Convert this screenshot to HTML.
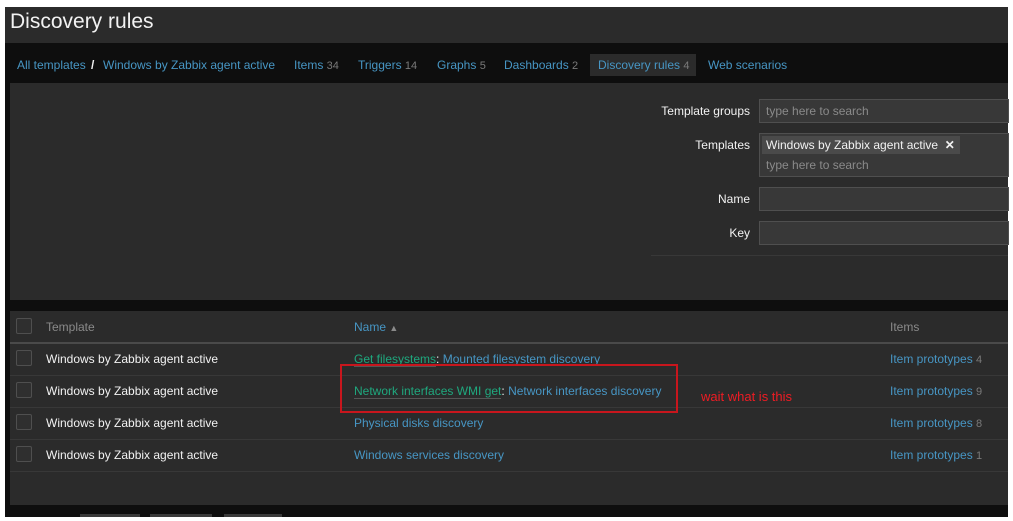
<!DOCTYPE html>
<html><head><meta charset="utf-8"><style>
*{margin:0;padding:0;box-sizing:border-box}
body{width:1013px;height:521px;background:#fff;position:relative;overflow:hidden;font-family:"Liberation Sans",Arial,sans-serif;font-size:12px}
.a{position:absolute}
.app{left:5px;top:7px;width:1003px;height:510px;background:#0e0e0e}
.hdr{left:5px;top:7px;width:1003px;height:36px;background:#2b2b2b;color:#f2f2f2;font-size:21px;padding:3px 0 0 5px}
.lnk{color:#4796c4}
.cnt{color:#7a7a7a;font-size:11px}
.nav span{position:absolute;top:58px}
.nav span.cnt{position:static}
.flt{left:10px;top:83px;width:998px;height:217px;background:#2b2b2b}
.lbl{color:#f2f2f2;text-align:right;width:120px}
.inp{background:#383838;border:1px solid #4f4f4f;color:#8a8a8a;padding-left:6px}
.tbl{left:10px;top:311px;width:998px;height:194px;background:#2b2b2b}
.row{left:10px;width:998px;height:32px;border-bottom:1px solid #383838}
.cb{width:16px;height:16px;border:1px solid #4f4f4f;background:#2f2f2f;border-radius:2px}
.w{color:#f2f2f2}
.g{color:#1fa87e}
</style></head><body>
<div class="a app"></div>
<div class="a hdr">Discovery rules</div>
<div class="a" style="left:1008px;top:7px;width:5px;height:514px;background:#fff"></div>
<div class="nav">
<span class="lnk" style="left:17px">All templates</span>
<span style="left:91px;color:#f2f2f2;font-weight:bold">/</span>
<span class="lnk" style="left:103px">Windows by Zabbix agent active</span>
<span class="lnk" style="left:294px">Items <span class="cnt">34</span></span>
<span class="lnk" style="left:358px">Triggers <span class="cnt">14</span></span>
<span class="lnk" style="left:437px">Graphs <span class="cnt">5</span></span>
<span class="lnk" style="left:504px">Dashboards <span class="cnt">2</span></span>
</div>
<div class="a" style="left:590px;top:54px;width:106px;height:22px;background:#2b2b2b"></div>
<div class="a lnk" style="left:598px;top:58px">Discovery rules <span class="cnt">4</span></div>
<div class="a lnk" style="left:708px;top:58px">Web scenarios</div>
<div class="a flt"></div>
<div class="a lbl" style="left:630px;top:104px">Template groups</div>
<div class="a inp" style="left:759px;top:99px;width:250px;height:24px;line-height:22px">type here to search</div>
<div class="a lbl" style="left:630px;top:138px">Templates</div>
<div class="a inp" style="left:759px;top:133px;width:250px;height:44px"></div>
<div class="a" style="left:762px;top:136px;width:198px;height:18px;background:#4a4a4a;color:#f2f2f2;padding:2px 0 0 4px">Windows by Zabbix agent active &nbsp;<b>✕</b></div>
<div class="a" style="left:766px;top:158px;color:#8a8a8a">type here to search</div>
<div class="a lbl" style="left:630px;top:192px">Name</div>
<div class="a inp" style="left:759px;top:187px;width:250px;height:24px"></div>
<div class="a lbl" style="left:630px;top:226px">Key</div>
<div class="a inp" style="left:759px;top:221px;width:250px;height:24px"></div>
<div class="a" style="left:651px;top:255px;width:357px;height:1px;background:#383838"></div>
<div class="a tbl"></div>
<div class="a" style="left:10px;top:342px;width:998px;height:2px;background:#4a4a4a"></div>
<div class="a cb" style="left:16px;top:318px"></div>
<div class="a" style="left:46px;top:320px;color:#8a8a8a">Template</div>
<div class="a lnk" style="left:354px;top:320px">Name <span style="color:#8a8a8a;font-size:9px">▲</span></div>
<div class="a" style="left:890px;top:320px;color:#8a8a8a">Items</div>

<div class="a row" style="top:344px"></div>
<div class="a row" style="top:376px"></div>
<div class="a row" style="top:408px"></div>
<div class="a row" style="top:440px"></div>

<div class="a cb" style="left:16px;top:350px"></div>
<div class="a w" style="left:46px;top:352px">Windows by Zabbix agent active</div>
<div class="a" style="left:354px;top:352px"><span class="g" style="border-bottom:1px solid #555">Get filesystems</span><span class="w">:</span> <span class="lnk">Mounted filesystem discovery</span></div>
<div class="a lnk" style="left:890px;top:352px">Item prototypes <span class="cnt">4</span></div>

<div class="a cb" style="left:16px;top:382px"></div>
<div class="a w" style="left:46px;top:384px">Windows by Zabbix agent active</div>
<div class="a" style="left:354px;top:384px"><span class="g" style="border-bottom:1px solid #555">Network interfaces WMI get</span><span class="w">:</span> <span class="lnk">Network interfaces discovery</span></div>
<div class="a lnk" style="left:890px;top:384px">Item prototypes <span class="cnt">9</span></div>

<div class="a cb" style="left:16px;top:414px"></div>
<div class="a w" style="left:46px;top:416px">Windows by Zabbix agent active</div>
<div class="a lnk" style="left:354px;top:416px">Physical disks discovery</div>
<div class="a lnk" style="left:890px;top:416px">Item prototypes <span class="cnt">8</span></div>

<div class="a cb" style="left:16px;top:446px"></div>
<div class="a w" style="left:46px;top:448px">Windows by Zabbix agent active</div>
<div class="a lnk" style="left:354px;top:448px">Windows services discovery</div>
<div class="a lnk" style="left:890px;top:448px">Item prototypes <span class="cnt">1</span></div>

<div class="a" style="left:340px;top:364px;width:338px;height:49px;border:2px solid #c8161d"></div>
<div class="a" style="left:701px;top:389px;color:#ee1c24;font-size:13px">wait what is this</div>

<div class="a" style="left:80px;top:514px;width:60px;height:3px;background:#3a3a3a"></div>
<div class="a" style="left:150px;top:514px;width:62px;height:3px;background:#3a3a3a"></div>
<div class="a" style="left:224px;top:514px;width:58px;height:3px;background:#3a3a3a"></div>
</body></html>
